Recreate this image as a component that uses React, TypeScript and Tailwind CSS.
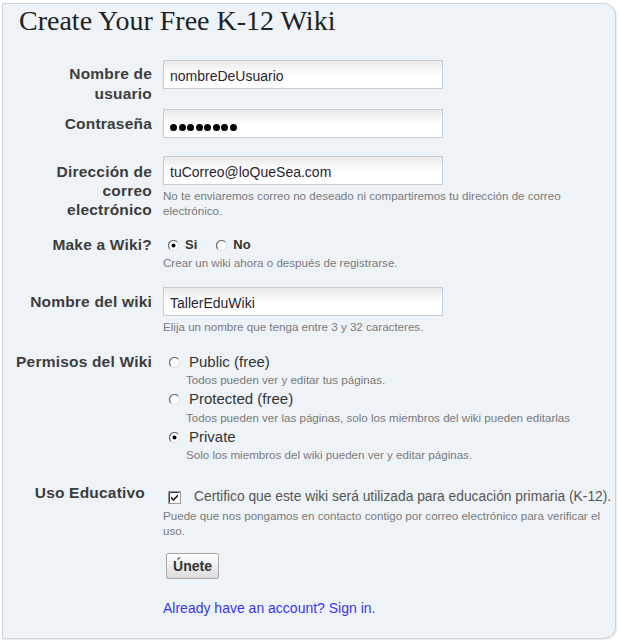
import React from 'react';

const sans = "font-['Liberation_Sans',Arial,sans-serif]";

function Radio({ checked }: { checked?: boolean }) {
  return (
    <svg width="11" height="11" viewBox="0 0 11 11" className="shrink-0">
      <circle cx="5.5" cy="5.5" r="5" fill="#fff" />
      <path d="M9.04 1.96 A5 5 0 0 0 1.96 9.04" stroke="#6e6e6e" fill="none" strokeWidth="1.2" />
      <path d="M1.96 9.04 A5 5 0 0 0 9.04 1.96" stroke="#dcdcdc" fill="none" strokeWidth="1" />
      {checked && <circle cx="5.5" cy="5.5" r="2" fill="#000" />}
    </svg>
  );
}

function Checkbox() {
  return (
    <svg width="13" height="13" viewBox="0 0 13 13" className="shrink-0">
      <rect x="0.5" y="0.5" width="12" height="12" fill="#fff" stroke="#9a9a9a" />
      <path d="M1.5 11.5 V1.5 H11.5" stroke="#3a3a3a" fill="none" />
      <path d="M3 5.6 L5.3 7.9 L10 3.2 V5.4 L5.3 10.1 L3 7.8 Z" fill="#111" />
    </svg>
  );
}

function Field({ value }: { value: string }) {
  return (
    <div className="w-[280px] h-[29px] border border-[#c8cdd2] bg-linear-to-b from-[#e9e9e9] via-white to-white pl-[6px] pt-[5px] text-[14px] leading-[20px] text-[#2a2233]">
      {value}
    </div>
  );
}

function Help({ children, className = '' }: { children: React.ReactNode; className?: string }) {
  return <div className={`text-[11.6px] leading-[15px] text-[#7a7a7a] ${className}`}>{children}</div>;
}

function Row({
  label,
  labelClass = '',
  className = '',
  children,
}: {
  label?: React.ReactNode;
  labelClass?: string;
  className?: string;
  children: React.ReactNode;
}) {
  return (
    <div className={`flex ${className}`}>
      <div className={`w-[149px] shrink-0 text-right text-[15.5px] tracking-[0.2px] font-bold text-[#3d3d3d] ${labelClass}`}>
        {label}
      </div>
      <div className="ml-[11px] flex-1 pr-[2px]">{children}</div>
    </div>
  );
}

function Option({ title, help, checked }: { title: string; help: string; checked?: boolean }) {
  return (
    <div>
      <div className="flex items-center h-[20px] pl-[6px]">
        <Radio checked={checked} />
        <span className="ml-[9px] text-[15px] text-[#333]">{title}</span>
      </div>
      <Help className="pl-[23px]">{help}</Help>
    </div>
  );
}

export default function App() {
  return (
    <div className={`w-[619px] h-[640px] bg-white pt-[3px] pl-[2px] ${sans}`}>
      <div className="w-[614px] h-[636px] bg-[#eef3f7] border border-[#cdd4db] rounded-tr-[12px] rounded-br-[12px] shadow-[1px_1px_1px_rgba(0,0,0,0.08)]">
        <h1 className="pl-[16px] text-[28px] leading-[34px] text-[#222] font-['Liberation_Serif',serif] font-normal">
          Create Your Free K-12 Wiki
        </h1>

        <Row className="mt-[22px]" labelClass="pt-[4px] leading-[20px]" label={<>Nombre de<br />usuario</>}>
          <Field value="nombreDeUsuario" />
        </Row>

        <Row className="mt-[5px]" labelClass="pt-[5px] leading-[20px]" label="Contraseña">
          <div className="w-[280px] h-[29px] border border-[#c8cdd2] bg-linear-to-b from-[#e9e9e9] via-white to-white pl-[6px] flex items-center gap-[1.5px] pt-[7px]">
            {Array.from({ length: 8 }).map((_, i) => (
              <span key={i} className="w-[7px] h-[7px] rounded-full bg-black" />
            ))}
          </div>
        </Row>

        <Row
          className="mt-[18px]"
          labelClass="pt-[5.5px] leading-[19px]"
          label={<>Dirección de<br />correo<br />electrónico</>}
        >
          <Field value="tuCorreo@loQueSea.com" />
          <Help className="mt-[3px]">
            No te enviaremos correo no deseado ni compartiremos tu dirección de correo electrónico.
          </Help>
        </Row>

        <Row className="mt-[16.5px]" labelClass="leading-[20px]" label="Make a Wiki?">
          <div className="flex items-center h-[20px] pl-[5px] text-[13px] font-bold text-[#333]">
            <Radio checked />
            <span className="ml-[6px]">Si</span>
            <span className="ml-[19px]"><Radio /></span>
            <span className="ml-[6px]">No</span>
          </div>
          <Help>Crear un wiki ahora o después de registrarse.</Help>
        </Row>

        <Row className="mt-[17px]" labelClass="pt-[4.7px] leading-[20px]" label="Nombre del wiki">
          <Field value="TallerEduWiki" />
          <Help className="mt-[3px]">Elija un nombre que tenga entre 3 y 32 caracteres.</Help>
        </Row>

        <Row className="mt-[18px]" labelClass="leading-[20px]" label="Permisos del Wiki">
          <div className="flex flex-col gap-[2.5px]">
            <Option title="Public (free)" help="Todos pueden ver y editar tus páginas." />
            <Option
              title="Protected (free)"
              help="Todos pueden ver las páginas, solo los miembros del wiki pueden editarlas"
            />
            <Option title="Private" help="Solo los miembros del wiki pueden ver y editar páginas." checked />
          </div>
        </Row>

        <Row className="mt-[21px]" labelClass="leading-[20px] pr-[7px]" label="Uso Educativo">
          <div className="pt-[4.5px]">
            <div className="flex items-center h-[20px] pl-[5px]">
              <Checkbox />
              <span className="ml-[13px] text-[13.8px] whitespace-nowrap text-[#555]">
                Certifico que este wiki será utilizada para educación primaria (K-12).
              </span>
            </div>
            <Help>
              Puede que nos pongamos en contacto contigo por correo electrónico para verificar el uso.
            </Help>
          </div>
        </Row>

        <Row className="mt-[15.5px]">
          <button className="ml-[3px] w-[53px] h-[26px] border border-[#a8a8a8] rounded-[2px] bg-linear-to-b from-white to-[#dcdcdc] text-[14px] font-bold text-[#333]">
            Únete
          </button>
        </Row>

        <Row className="mt-[16.5px]">
          <a href="#" className="text-[14px] leading-[20px] text-[#3c33ee]">
            Already have an account? Sign in.
          </a>
        </Row>
      </div>
    </div>
  );
}
